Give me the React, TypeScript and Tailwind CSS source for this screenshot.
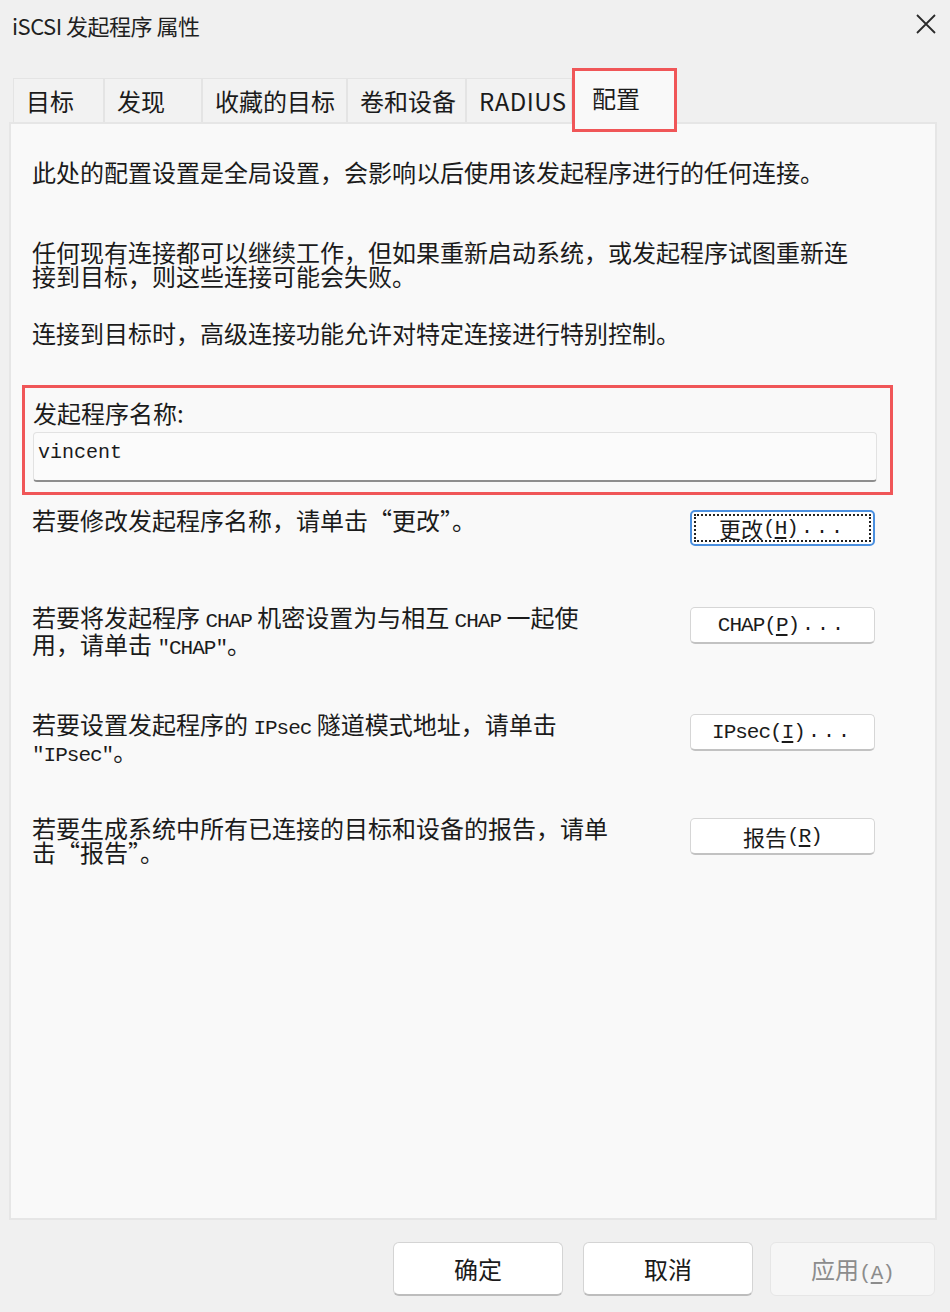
import React from 'react';

const cjk = '"Noto Sans CJK SC", "Noto Sans", sans-serif';
const mono = '"Liberation Mono", "Noto Sans CJK SC", monospace';

const tabs = [
  { label: '目标', w: 'w-[91px]' },
  { label: '发现', w: 'w-[98px]' },
  { label: '收藏的目标', w: 'w-[145px]' },
  { label: '卷和设备', w: 'w-[119px]' },
  { label: 'RADIUS', w: 'w-[106px]' },
];

function Mono({ children }: { children: React.ReactNode }) {
  return (
    <span className="text-[21px] leading-none tracking-[-1px]" style={{ fontFamily: mono }}>
      {children}
    </span>
  );
}

function Dots() {
  return (
    <span className="text-[20px] leading-none tracking-[3px] pl-[3px]" style={{ fontFamily: mono }}>
      ...
    </span>
  );
}

function SideButton({ children, focused = false }: { children: React.ReactNode; focused?: boolean }) {
  if (focused) {
    return (
      <button className="mt-[2px] w-[185px] h-[36px] shrink-0 rounded-[5px] border-2 border-[#4a8fdf] bg-white p-[2px] leading-none">
        <span className="flex h-full w-full items-center justify-center border-2 border-dotted border-[#222] text-[22px] text-[#1b1b1b]">
          {children}
        </span>
      </button>
    );
  }
  return (
    <button className="mt-[2px] w-[185px] h-[37px] shrink-0 rounded-[5px] border border-[#d6d6d6] border-b-2 border-b-[#c2c2c2] bg-white flex items-center justify-center text-[22px] leading-none text-[#1b1b1b]">
      {children}
    </button>
  );
}

function Key({ k }: { k: string }) {
  return (
    <span style={{ fontFamily: mono }} className="text-[21px] leading-none tracking-[-1px]">
      (<span className="underline underline-offset-[3px]">{k}</span>)
    </span>
  );
}

export default function App() {
  return (
    <div
      className="w-[950px] h-[1312px] bg-[#f0f0f0] text-[#1b1b1b] flex flex-col overflow-hidden"
      style={{ fontFamily: cjk }}
    >
      {/* title bar */}
      <div className="h-[50px] flex items-center justify-between pl-[12px] pr-[13px]">
        <span className="text-[22px] tracking-[-0.5px] text-[#1f1f1f]">iSCSI 发起程序 属性</span>
        <svg width="22" height="22" viewBox="0 0 22 22" className="mt-[-2px]">
          <path d="M2 2 L20 20 M20 2 L2 20" stroke="#2a2a2a" strokeWidth="1.8" fill="none" />
        </svg>
      </div>

      {/* tabs */}
      <div className="h-[72px] flex items-end pl-[13px]">
        {tabs.map((t) => (
          <div
            key={t.label}
            className={`${t.w} h-[44px] border border-b-0 border-[#e4e4e4] bg-[#f2f2f2] flex items-center pl-[12px] text-[24px] ${
              t.label === 'RADIUS' ? 'tracking-[0.5px] text-[22px]' : ''
            }`}
          >
            {t.label}
          </div>
        ))}
        <div className="relative z-10 -mb-[10px] w-[105px] h-[64px] border-[3px] border-[#f05658] bg-[#f9f9f9] flex items-start pt-[9px] pl-[17px] text-[24px]">
          配置
        </div>
      </div>

      {/* panel */}
      <div className="ml-[9px] w-[928px] h-[1098px] border-2 border-[#e6e6e6] bg-[#f9f9f9] pl-[21px] pr-[60px] pt-[36px] text-[24px] leading-[24px]">
        <p>此处的配置设置是全局设置，会影响以后使用该发起程序进行的任何连接。</p>
        <p className="mt-[56px]">
          任何现有连接都可以继续工作，但如果重新启动系统，或发起程序试图重新连
          <br />
          接到目标，则这些连接可能会失败。
        </p>
        <p className="mt-[33px]">连接到目标时，高级连接功能允许对特定连接进行特别控制。</p>

        <div className="mt-[40px] -ml-[10px] w-[871px] h-[110px] border-[3px] border-[#f05658] pl-[8px] pr-[13px] pt-[13px]">
          <div>发起程序名称:</div>
          <div className="mt-[7px] h-[50px] rounded-[4px] border border-[#e2e2e2] border-b-2 border-b-[#8e8e8e] bg-[#fbfbfb] pl-[4px] pt-[3px]">
            <span className="text-[20px]" style={{ fontFamily: mono }}>
              vincent
            </span>
          </div>
        </div>

        <div className="mt-[13px] flex justify-between items-start">
          <p>若要修改发起程序名称，请单击“更改”。</p>
          <SideButton focused>
            更改<Key k="H" />
            <Dots />
          </SideButton>
        </div>

        <div className="mt-[59px] flex justify-between items-start">
          <p>
            若要将发起程序 <Mono>CHAP</Mono> 机密设置为与相互 <Mono>CHAP</Mono> 一起使
            <br />
            用，请单击 <Mono>"CHAP"</Mono>。
          </p>
          <SideButton>
            <Mono>CHAP</Mono>
            <Key k="P" />
            <Dots />
          </SideButton>
        </div>

        <div className="mt-[53px] flex justify-between items-start">
          <p>
            若要设置发起程序的 <Mono>IPsec</Mono> 隧道模式地址，请单击
            <br />
            <Mono>"IPsec"</Mono>。
          </p>
          <SideButton>
            <Mono>IPsec</Mono>
            <Key k="I" />
            <Dots />
          </SideButton>
        </div>

        <div className="mt-[50px] flex justify-between items-start">
          <p>
            若要生成系统中所有已连接的目标和设备的报告，请单
            <br />
            击“报告”。
          </p>
          <SideButton>
            报告<Key k="R" />
          </SideButton>
        </div>
      </div>

      {/* footer */}
      <div className="flex justify-end pt-[22px] pr-[15px] text-[24px]">
        <button className="w-[170px] h-[54px] rounded-[6px] border border-[#d4d4d4] border-b-2 border-b-[#bdbdbd] bg-white">
          确定
        </button>
        <button className="ml-[20px] w-[170px] h-[54px] rounded-[6px] border border-[#d4d4d4] border-b-2 border-b-[#bdbdbd] bg-white">
          取消
        </button>
        <button className="ml-[17px] w-[165px] h-[54px] rounded-[6px] border border-[#e6e6e6] bg-[#f6f6f6] text-[#8c8c8c]">
          应用<Key k="A" />
        </button>
      </div>
    </div>
  );
}
